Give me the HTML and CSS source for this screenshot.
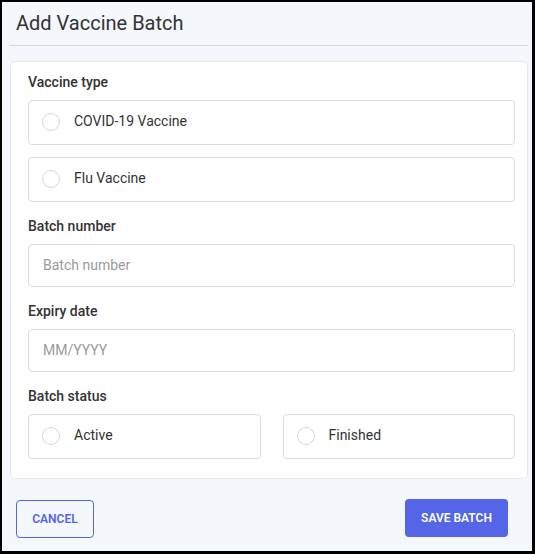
FILE: index.html
```html
<!DOCTYPE html>
<html lang="en">
<head>
<meta charset="utf-8">
<title>Add Vaccine Batch</title>
<link rel="stylesheet" href="styles.css">
</head>
<body>
<div class="dialog">
  <header class="head">
    <h1 class="title">Add Vaccine Batch</h1>
  </header>
  <main class="card">
    <section class="field">
      <div class="label">Vaccine type</div>
      <div class="stack">
        <label class="option"><span class="radio"></span><span class="opt-text">COVID-19 Vaccine</span></label>
        <label class="option"><span class="radio"></span><span class="opt-text">Flu Vaccine</span></label>
      </div>
    </section>
    <section class="field">
      <div class="label">Batch number</div>
      <div class="input"><span class="placeholder">Batch number</span></div>
    </section>
    <section class="field">
      <div class="label">Expiry date</div>
      <div class="input"><span class="placeholder">MM/YYYY</span></div>
    </section>
    <section class="field">
      <div class="label">Batch status</div>
      <div class="row">
        <label class="option"><span class="radio"></span><span class="opt-text">Active</span></label>
        <label class="option"><span class="radio"></span><span class="opt-text">Finished</span></label>
      </div>
    </section>
  </main>
  <footer class="actions">
    <button class="btn btn-outline">CANCEL</button>
    <button class="btn btn-primary">SAVE BATCH</button>
  </footer>
</div>
</body>
</html>
```
FILE: styles.css
```css
* { box-sizing: border-box; }
html, body { margin: 0; padding: 0; }
body {
  font-family: Roboto, "Liberation Sans", Arial, sans-serif;
  color: #333;
}
.dialog {
  width: 535px;
  height: 554px;
  background: #f4f7fc;
  border-style: solid;
  border-color: #000;
  border-width: 2px 3px 3px 2px;
  display: flex;
  flex-direction: column;
  padding: 0 4px 0 7px;
}
.head {
  border-bottom: 1px solid #d3d7dd;
  height: 44px;
  padding: 9px 0 0 7px;
}
.title {
  margin: 0;
  font-size: 20px;
  font-weight: 400;
  line-height: 24px;
  color: #333;
}
.card {
  margin: 15px 0 0 1px;
  background: #fff;
  border: 1px solid #e3e8ef;
  border-radius: 5px;
  padding: 10px 12px 19px 17px;
  display: flex;
  flex-direction: column;
  gap: 14px;
}
.label {
  font-size: 14px;
  font-weight: 500;
  line-height: 20px;
  margin-bottom: 8px;
  color: #333;
}
.stack {
  display: flex;
  flex-direction: column;
  gap: 12px;
}
.row {
  display: grid;
  grid-template-columns: 1fr 1fr;
  gap: 22px;
}
.option {
  height: 45px;
  border: 1px solid #dcdcdc;
  border-radius: 4px;
  display: flex;
  align-items: center;
  padding-left: 13px;
  gap: 14px;
  font-size: 14px;
  color: #333;
}
.opt-text { line-height: 16px; margin-top: -3px; }
.radio {
  width: 18px;
  height: 18px;
  border: 1px solid #d6d6d6;
  border-radius: 50%;
  flex: none;
  margin-top: -1px;
}
.input {
  height: 43px;
  border: 1px solid #dcdcdc;
  border-radius: 4px;
  display: flex;
  align-items: center;
  padding-left: 14px;
  font-size: 14px;
}
.placeholder { color: #9a9a9a; line-height: 16px; margin-top: -1px; }
.actions {
  display: flex;
  justify-content: space-between;
  align-items: flex-start;
  padding: 20px 20px 0 7px;
}
.btn {
  height: 38px;
  font-family: Roboto, "Liberation Sans", Arial, sans-serif;
  font-size: 12px;
  font-weight: 600;
  border-radius: 4px;
  padding: 0 14px;
  cursor: pointer;
}
.btn-outline {
  background: transparent;
  border: 1px solid #5563e6;
  color: #5563e6;
  width: 78px;
  margin-top: 1px;
}
.btn-primary {
  background: #5465e8;
  border: none;
  color: #fff;
  width: 103px;
}
```
